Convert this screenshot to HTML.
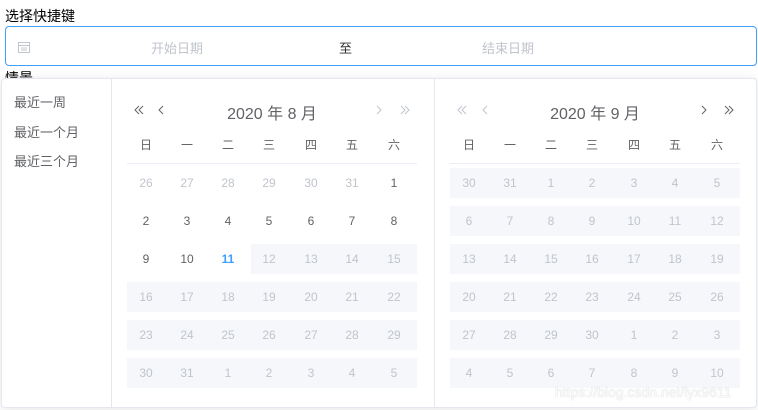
<!DOCTYPE html>
<html><head><meta charset="utf-8"><style>
*{margin:0;padding:0;box-sizing:border-box}
body{width:758px;height:410px;overflow:hidden;background:#fff;font-family:"Liberation Sans","Noto Sans CJK SC",sans-serif;position:relative;color:#606266}
.a{position:absolute}
.lbl{left:5px;top:6px;font-size:14px;color:#000}
.inp{left:5px;top:26px;width:752px;height:40px;border:1px solid #409eff;border-radius:4px}
.ph{font-size:13px;color:#c0c4cc;top:11px}
.pop{left:1px;top:78px;width:756px;height:330px;border:1px solid #e4e7ed;border-radius:4px;background:#fff;box-shadow:0 2px 12px rgba(0,0,0,.1)}
.side{left:0;top:0;width:110px;height:328px;border-right:1px solid #e4e7ed}
.sc{left:12px;font-size:13px;color:#606266}
.mid{left:432px;top:0;width:1px;height:328px;background:#e4e7ed}
.title{font-size:16px;color:#606266;width:200px;text-align:center}
.wk{font-size:12px;color:#606266;width:40px;text-align:center}
.bg{background:#f5f7fa;height:30px}
.d{font-size:12px;width:40px;text-align:center;line-height:30px;height:30px}
.g{color:#c0c4cc}
.t{color:#409eff;font-weight:bold}
.line{height:1px;background:#ebeef5}
</style></head><body>
<div class="a lbl">选择快捷键</div>
<div class="a" style="left:5px;top:68px;font-size:14px;color:#000">情景</div>
<div class="a inp">
<svg class="a" style="left:11px;top:13px" width="14" height="14" viewBox="0 0 14 14"><rect x="1.5" y="2.5" width="11" height="10" fill="none" stroke="#c0c4cc"/><line x1="1.5" y1="5.5" x2="12.5" y2="5.5" stroke="#c0c4cc"/><line x1="4" y1="8" x2="10" y2="8" stroke="#c0c4cc"/><line x1="4" y1="10" x2="10" y2="10" stroke="#c0c4cc"/></svg>
<div class="a ph" style="left:145px">开始日期</div>
<div class="a" style="left:333px;top:11px;font-size:13px;color:#303133">至</div>
<div class="a ph" style="left:476px">结束日期</div>
</div>
<div class="a pop">
<div class="a side">
<div class="a sc" style="top:13px">最近一周</div>
<div class="a sc" style="top:43px">最近一个月</div>
<div class="a sc" style="top:72px">最近三个月</div>
</div>
<div class="a mid"></div>
</div>
<div id="cal" class="a" style="left:0;top:0"></div>
<div class="a" style="left:555px;top:384px;font-size:14px;color:rgba(255,255,255,.9);text-shadow:0 0 1px #bbb">https://blog.csdn.net/lyx9611</div>
<script>
function svgA(x,type,col){
 var p='';
 if(type=='dl')p='M6 1L2 5L6 9M10 1L6 5L10 9';
 if(type=='l')p='M6 1L2 5L6 9';
 if(type=='r')p='M2 1L6 5L2 9';
 if(type=='dr')p='M2 1L6 5L2 9M6 1L10 5L6 9';
 return '<svg class="a" style="left:'+x+'px;top:105px" width="12" height="10" viewBox="0 0 12 10"><path d="'+p+'" fill="none" stroke="'+col+'" stroke-width="1"/></svg>';
}
function cal(x0,title,bgx,rows,ar){
 var h='';
 var cx=[0,41,82,123,165,206,248];
 h+='<div class="a title" style="left:'+(x0+46)+'px;top:100px">'+title+'</div>';
 h+=svgA(ar[0],'dl',ar[4])+svgA(ar[1],'l',ar[4])+svgA(ar[2],'r',ar[5])+svgA(ar[3],'dr',ar[5]);
 var w=['日','一','二','三','四','五','六'];
 for(var i=0;i<7;i++)h+='<div class="a wk" style="left:'+(x0+cx[i])+'px;top:136px">'+w[i]+'</div>';
 h+='<div class="a line" style="left:'+(x0+1)+'px;top:163px;width:290px"></div>';
 for(var r=0;r<6;r++){
  var y=168+r*38;
  var b=bgx[r];
  if(b!==null)h+='<div class="a bg" style="left:'+(x0+1+b*41.4)+'px;top:'+y+'px;width:'+(290-b*41.4)+'px"></div>';
  for(var c=0;c<7;c++){var v=rows[r][c];h+='<div class="a d '+v[1]+'" style="left:'+(x0+cx[c])+'px;top:'+y+'px">'+v[0]+'</div>';}
 }
 return h;
}
function R(a,cls){return a.map(function(v,i){return [v,cls[i]]});}
var g='g',n='';
var L=[R([26,27,28,29,30,31,1],[g,g,g,g,g,g,n]),R([2,3,4,5,6,7,8],[n,n,n,n,n,n,n]),R([9,10,11,12,13,14,15],[n,n,'t',g,g,g,g]),R([16,17,18,19,20,21,22],[g,g,g,g,g,g,g]),R([23,24,25,26,27,28,29],[g,g,g,g,g,g,g]),R([30,31,1,2,3,4,5],[g,g,g,g,g,g,g])];
var G=[g,g,g,g,g,g,g];
var Rt=[R([30,31,1,2,3,4,5],G),R([6,7,8,9,10,11,12],G),R([13,14,15,16,17,18,19],G),R([20,21,22,23,24,25,26],G),R([27,28,29,30,1,2,3],G),R([4,5,6,7,8,9,10],G)];
var s=cal(126,'2020 年 8 月',[null,null,3,0,0,0],L,[133,157,375,399,'#606266','#c0c4cc']);
s+=cal(449,'2020 年 9 月',[0,0,0,0,0,0],Rt,[456,481,700,723,'#c0c4cc','#606266']);
document.getElementById('cal').innerHTML=s;
</script>
</body></html>
